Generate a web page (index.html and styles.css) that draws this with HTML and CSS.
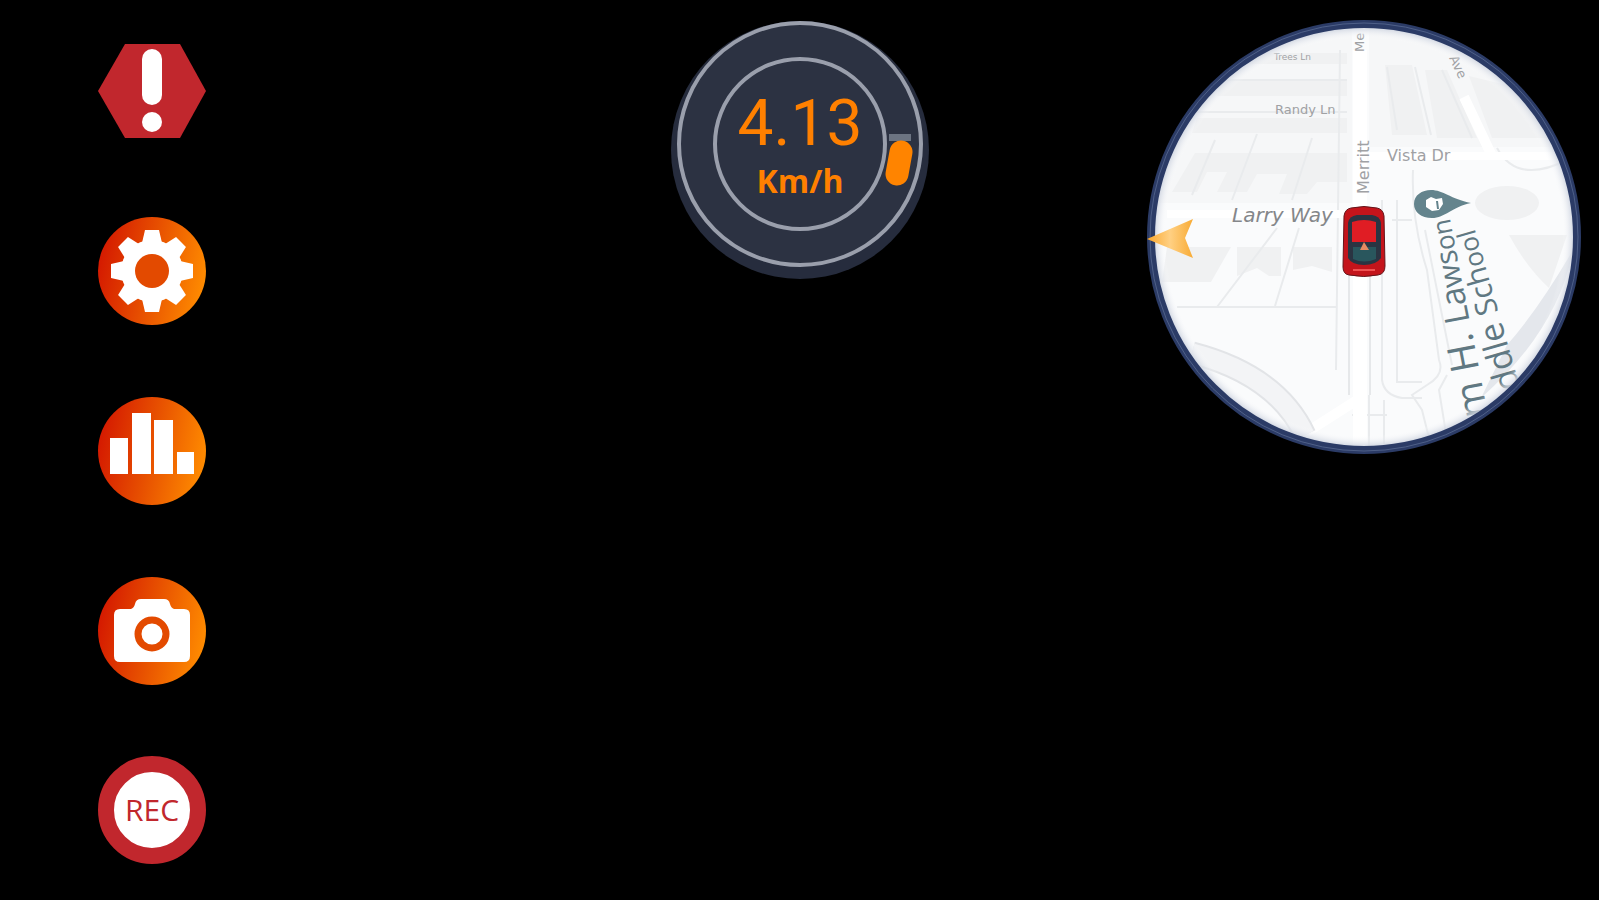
FILE: index.html
```html
<!DOCTYPE html>
<html lang="en">
<head>
<meta charset="utf-8">
<title>Driving HUD</title>
<link rel="stylesheet" href="styles.css">
</head>
<body>
<main class="hud">
  <nav class="rail" aria-label="Controls">
    <button class="rail-button" type="button" aria-label="Alert">
      <svg class="icon" viewBox="0 0 108 108">
        <path fill="#c1272d" d="M27 7H82L108 54 82 101H27L0 54Z"/>
        <rect x="44" y="12" width="20" height="56" rx="10" fill="#fff"/>
        <circle cx="54" cy="85" r="10" fill="#fff"/>
      </svg>
    </button>
    <button class="rail-button" type="button" aria-label="Settings">
      <svg class="icon" viewBox="0 0 108 108">
        <defs>
          <linearGradient id="ember" x1="0" y1="0.4" x2="1" y2="0.6">
            <stop offset="0" stop-color="#d41900"/>
            <stop offset="0.5" stop-color="#e85200"/>
            <stop offset="1" stop-color="#ff8c00"/>
          </linearGradient>
        </defs>
        <circle cx="54" cy="54" r="54" fill="url(#ember)"/>
        <g fill="#fff">
          <circle cx="54" cy="54" r="31"/>
          <path id="teeth" d="M44 26 47 13H61L64 26V82L61 95H47L44 82Z"/>
          <use href="#teeth" transform="rotate(45 54 54)"/>
          <use href="#teeth" transform="rotate(90 54 54)"/>
          <use href="#teeth" transform="rotate(135 54 54)"/>
        </g>
        <circle cx="54" cy="54" r="17" fill="#e34a00"/>
      </svg>
    </button>
    <button class="rail-button" type="button" aria-label="Statistics">
      <svg class="icon" viewBox="0 0 108 108">
        <circle cx="54" cy="54" r="54" fill="url(#ember)"/>
        <path fill="#fff" d="M12 41H30V77H12ZM34 16H53V77H34ZM56 23H75V77H56ZM79 55H96V77H79Z"/>
      </svg>
    </button>
    <button class="rail-button" type="button" aria-label="Camera">
      <svg class="icon" viewBox="0 0 108 108">
        <circle cx="54" cy="54" r="54" fill="url(#ember)"/>
        <path fill="#fff" d="M22 32H33Q36 31 37 27 38 22 43 22H66Q71 22 72 27 73 31 76 32H86Q92 32 92 38V79Q92 85 86 85H22Q16 85 16 79V38Q16 32 22 32Z"/>
        <circle cx="54" cy="57" r="14" fill="#fff" stroke="#e34a00" stroke-width="7"/>
      </svg>
    </button>
    <button class="rail-button" type="button" aria-label="Record">
      <svg class="icon" viewBox="0 0 108 108">
        <circle cx="54" cy="53" r="46" fill="#fff" stroke="#c1272d" stroke-width="16"/>
        <text class="rec" x="54" y="64" text-anchor="middle">REC</text>
      </svg>
    </button>
  </nav>

  <section class="gauge" aria-label="Speed">
    <svg class="gauge-face" viewBox="0 0 260 260">
      <circle cx="130" cy="130" r="129" fill="#262c3d"/>
      <circle cx="130" cy="124" r="121" fill="#2c3242" stroke="#9a9fac" stroke-width="4"/>
      <circle cx="130" cy="124" r="85" fill="none" stroke="#9a9fac" stroke-width="4"/>
      <path fill="#6c7482" d="M219 114H241V121H219Z"/>
      <path d="M231 132 227 154" stroke="#ff8400" stroke-width="23" stroke-linecap="round"/>
      <text class="speed" x="130" y="125" text-anchor="middle">4.13</text>
      <text class="unit" x="130" y="173" text-anchor="middle">Km/h</text>
    </svg>
  </section>

  <section class="map" aria-label="Map">
    <svg class="map-face" viewBox="0 0 434 434">
      <defs>
        <clipPath id="lens"><circle cx="217" cy="217" r="211"/></clipPath>
        <radialGradient id="rim">
          <stop offset="0.94" stop-color="#fff" stop-opacity="0"/>
          <stop offset="1" stop-color="#c6cddb"/>
        </radialGradient>
        <linearGradient id="arrow" x1="0" y1="0" x2="1" y2="0">
          <stop offset="0" stop-color="#f9a62b"/>
          <stop offset="0.5" stop-color="#ffd083"/>
          <stop offset="1" stop-color="#f8ab35"/>
        </linearGradient>
      </defs>
      <circle cx="217" cy="217" r="213" fill="#fafbfc"/>
      <g clip-path="url(#lens)">
        <path fill="#f6f7f8" d="M0 0H205V183H0ZM222 0H440V127H222Z"/>
        <g fill="#f0f1f2">
          <path d="M75 60H200V76H70ZM80 33H200V44H95ZM50 98H200V113H45ZM38 150 48 133H200V162H170L160 174H132L140 154H110L100 172H70L80 152H60L50 172H25ZM20 227H84L64 262H15ZM90 227H134V256H122L110 248 90 256ZM146 227H185V252L165 246 146 250ZM238 45H265L280 115H245ZM278 50H300L330 118H290ZM322 56 380 70 410 118H345Z"/>
          <ellipse cx="360" cy="183" rx="32" ry="17"/>
          <path d="M362 215H420L402 268Q380 248 362 215Z"/>
        </g>
        <path fill="#e4e7ec" d="M426 230Q411 310 334 378L360 325Q391 290 426 230Z"/>
        <g fill="none" stroke="#e9ebed" stroke-width="2">
          <path d="M55 60H200M50 92H200M68 120 45 175M110 114 85 180M130 208 70 287M165 118 145 180M152 208 128 286M30 287H190M193 30 189 350M209 210V375L218 385M235 180V360Q237 375 255 378H275M245 200H265M266 150Q264 200 280 250L292 340Q298 355 280 365L265 375 275 390 285 430M240 47 250 110M268 47 284 115M295 50 325 118M350 128Q370 165 420 140M300 355 292 370 302 432M222 375V432M237 380V432M205 395H240M210 390V430M250 180V362H275M278 210 305 345"/>
        </g>
        <g fill="none" stroke="#fff">
          <path d="M213 30V430" stroke-width="14"/>
          <path d="M20 194H205M222 136H420" stroke-width="8"/>
          <path d="M317 77 345 136M160 412 218 375" stroke-width="10"/>
        </g>
        <path d="M202 235V375M223 235V375" stroke="#e6e8ea" stroke-width="2"/>
        <path d="M45 333Q130 355 158 415" fill="none" stroke="#e2e4e7" stroke-width="23"/>
        <path d="M45 333Q130 355 158 415" fill="none" stroke="#f3f4f6" stroke-width="19"/>
        <g class="road">
          <text class="road-tiny" x="127" y="40">Trees Ln</text>
          <text class="road-small" x="128" y="94">Randy Ln</text>
          <text class="road-mid" x="240" y="141">Vista Dr</text>
          <text class="road-main" x="85" y="202">Larry Way</text>
          <text class="road-mid" transform="translate(222 174) rotate(-90)">Merritt</text>
          <text class="road-small" transform="translate(217 32) rotate(-90)">Me</text>
          <text class="road-small" transform="translate(302 38) rotate(65)">Ave</text>
        </g>
        <g class="place">
          <text transform="translate(341 395) rotate(-101)"><tspan class="size-xl">m H. </tspan><tspan class="size-l">La</tspan><tspan class="size-m">ws</tspan><tspan class="size-s">on</tspan></text>
          <text transform="translate(373 367) rotate(-106)"><tspan class="size-l">ddle </tspan><tspan class="size-m">Sch</tspan><tspan class="size-s">ool</tspan></text>
        </g>
        <path fill="#64848d" d="M267 184C267 175 275 170 284 170 296 170 304 179 324 183 305 187 298 198 285 198 274 198 267 192 267 184Z"/>
        <path fill="#fff" d="M279 180 284 177 289 179 295 178 296 184 292 190 285 191 279 187Z"/>
        <path fill="none" stroke="#64848d" stroke-width="2" d="M290 181 291 189"/>
      </g>
      <circle cx="217" cy="217" r="211" fill="url(#rim)"/>
      <circle cx="217" cy="217" r="213" fill="none" stroke="#2b3b66" stroke-width="8"/>
      <circle cx="217" cy="217" r="214" fill="none" stroke="#4f6088" stroke-width="1"/>
      <path fill="url(#arrow)" d="M0 219 46 199 38 218 46 238Z"/>
      <g>
        <path fill="#c4141b" stroke="#64151a" stroke-width="1" d="M204 188Q217 185 230 188 236 189 237 196L238 246Q238 254 231 255 217 258 202 255 196 254 196 247L197 196Q198 189 204 188Z"/>
        <path fill="#2a3442" d="M201 203Q202 196 210 195H225Q233 196 234 203V238Q229 245 217 245 205 245 201 238Z"/>
        <path fill="#e01d24" d="M205 202Q217 198 229 202V222H205Z"/>
        <path fill="#29565d" d="M206 227H229V239Q217 244 206 239Z"/>
        <path fill="#e58a62" d="M213 230 217 222 222 230Z"/>
        <path stroke="#ef5252" stroke-width="2" d="M206 250H228"/>
      </g>
    </svg>
  </section>
</main>
</body>
</html>
```
FILE: styles.css
```css
* {
  box-sizing: border-box;
}

body {
  margin: 0;
  background: #000;
  font-family: "Open Sans", "Noto Sans", sans-serif;
}

.hud {
  display: grid;
  grid-template-columns: 1fr auto 1fr;
  align-items: start;
  min-height: 100vh;
  padding: 20px 18px;
}

.rail {
  display: flex;
  flex-direction: column;
  align-items: flex-start;
  gap: 72px;
  padding: 17px 0 0 80px;
}

.rail-button {
  display: block;
  width: 108px;
  height: 108px;
  padding: 0;
  border: 0;
  border-radius: 50%;
  background: none;
  font-family: inherit;
  cursor: pointer;
}

.icon,
.gauge-face,
.map-face {
  display: block;
  width: 100%;
  overflow: visible;
}

.gauge {
  width: 260px;
}

.map {
  width: 434px;
  justify-self: end;
}

.rec {
  font-size: 30px;
  fill: #c1272d;
}

.speed {
  font-family: Roboto, sans-serif;
  font-size: 64px;
  fill: #ff8000;
}

.unit {
  font-size: 32px;
  font-weight: 700;
  fill: #ff8000;
}

.road {
  font-family: "DejaVu Sans", sans-serif;
  fill: #9fa1a4;
}

.road-tiny {
  font-size: 9px;
}

.road-small {
  font-size: 13px;
}

.road-mid {
  font-size: 16px;
}

.road-main {
  font-size: 20px;
  font-style: oblique;
  fill: #85878a;
}

.place {
  fill: #607882;
}

.size-xl {
  font-size: 39px;
}

.size-l {
  font-size: 34px;
}

.size-m {
  font-size: 30px;
}

.size-s {
  font-size: 26px;
}
```
